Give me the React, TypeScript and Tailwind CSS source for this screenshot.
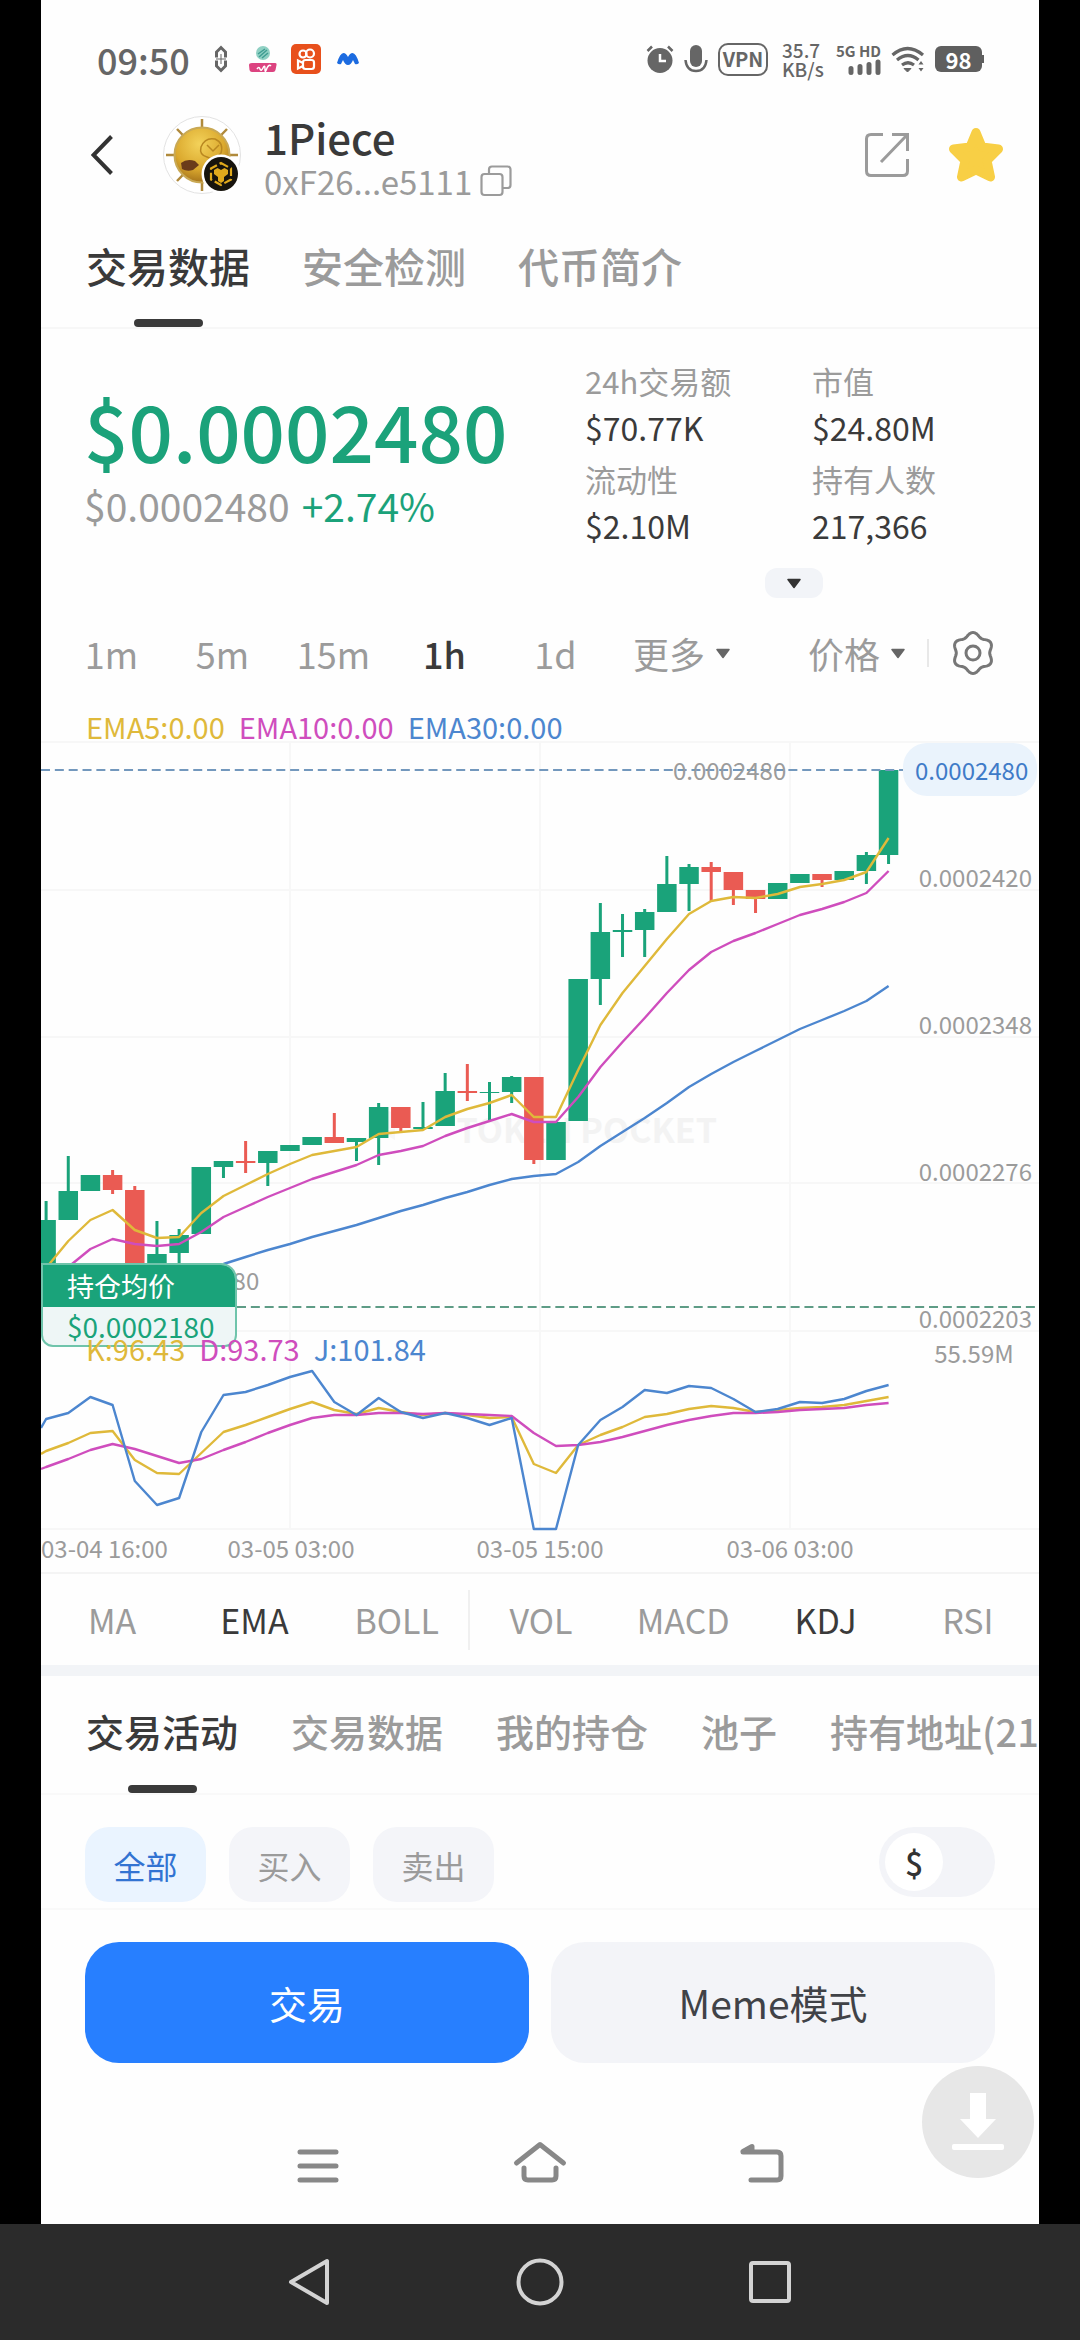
import { useState } from 'react'

// [high, top, bottom, low, direction] in chart units, one entry per hour
type Candle = [number, number, number, number, 'up' | 'down']

const candles: Candle[] = [
  [493, 512, 560, 560, 'up'],
  [448, 483, 512, 512, 'up'],
  [467, 467, 483, 483, 'up'],
  [462, 467, 482, 486, 'down'],
  [478, 482, 560, 560, 'down'],
  [513, 546, 560, 560, 'up'],
  [521, 527, 545, 556, 'up'],
  [459, 459, 526, 526, 'up'],
  [453, 453, 459, 470, 'up'],
  [433, 453, 455, 465, 'down'],
  [443, 443, 455, 478, 'up'],
  [437, 437, 443, 443, 'up'],
  [429, 429, 437, 437, 'up'],
  [405, 429, 435, 435, 'down'],
  [430, 430, 434, 453, 'up'],
  [395, 399, 430, 457, 'up'],
  [399, 399, 420, 425, 'down'],
  [394, 419, 421, 421, 'up'],
  [365, 383, 418, 418, 'up'],
  [356, 383, 385, 393, 'down'],
  [374, 384, 385, 412, 'up'],
  [368, 369, 384, 395, 'up'],
  [369, 369, 452, 456, 'down'],
  [414, 414, 452, 452, 'up'],
  [271, 271, 413, 413, 'up'],
  [195, 224, 271, 297, 'up'],
  [206, 222, 224, 249, 'up'],
  [201, 204, 222, 249, 'up'],
  [148, 176, 204, 204, 'up'],
  [156, 159, 176, 203, 'up'],
  [154, 159, 164, 194, 'down'],
  [164, 164, 182, 197, 'down'],
  [182, 182, 191, 205, 'down'],
  [175, 175, 191, 191, 'up'],
  [166, 166, 175, 175, 'up'],
  [166, 166, 172, 179, 'down'],
  [163, 163, 172, 172, 'up'],
  [144, 147, 163, 176, 'up'],
  [62, 62, 147, 156, 'up'],
]

const ema5 = [560, 533, 512, 502, 522, 530, 529, 505, 488, 477, 466, 456, 447, 443, 439, 426, 424, 422, 409, 401, 395, 387, 409, 409, 362, 317, 285, 258, 231, 206, 193, 189, 190, 186, 179, 176, 172, 164, 130]
const ema10 = [575, 559, 541, 531, 536, 538, 536, 524, 509, 499, 489, 480, 471, 464, 457, 447, 443, 438, 428, 420, 413, 406, 414, 414, 389, 359, 334, 310, 285, 262, 244, 233, 225, 216, 207, 201, 194, 185, 163]
const ema30 = [556, 549, 542, 536, 529, 523, 517, 510, 503, 497, 490, 484, 477, 471, 468, 466, 454, 438, 424, 410, 395, 379, 366, 354, 343, 332, 321, 312, 303, 293, 278]

const kLine = [743, 735, 725, 723, 752, 765, 766, 745, 724, 717, 709, 701, 694, 702, 706, 700, 704, 707, 705, 707, 710, 709, 756, 765, 737, 727, 719, 709, 706, 701, 698, 700, 704, 702, 700, 699, 697, 693, 689]
const dLine = [759, 751, 742, 736, 741, 748, 755, 751, 742, 734, 725, 717, 710, 707, 707, 705, 705, 706, 705, 706, 707, 708, 725, 738, 737, 734, 729, 723, 717, 712, 708, 705, 705, 704, 702, 701, 700, 697, 695]
const jLine = [711, 705, 689, 697, 773, 797, 790, 724, 687, 684, 677, 669, 663, 694, 707, 690, 704, 710, 705, 710, 717, 710, 821, 821, 737, 712, 699, 682, 685, 678, 680, 691, 704, 701, 694, 695, 691, 683, 677]

const xAt = (i: number) => 5.1 + 22.17 * i

function toPoints(values: number[], start = 0, edge?: number) {
  const pts = values.map((y, i) => `${xAt(i + start).toFixed(1)},${y}`)
  if (edge !== undefined) pts.unshift(`0,${edge}`)
  return pts.join(' ')
}

// six-lobed outline of the settings icon
const gearPoints = Array.from({ length: 120 }, (_, i) => {
  const a = (i / 120) * Math.PI * 2
  const r = 18.6 - 1.9 * Math.cos(6 * a)
  return `${(22 + r * Math.cos(a)).toFixed(2)},${(22 + r * Math.sin(a)).toFixed(2)}`
}).join(' ')

function Caret({ className }: { className: string }) {
  return (
    <svg viewBox="0 0 14 11" className={className} fill="currentColor" stroke="currentColor" strokeWidth="1.5" strokeLinejoin="round">
      <path d="M1 1.5h12L7 9.5z" />
    </svg>
  )
}

function StatusBar() {
  return (
    <div className="flex h-[88px] items-center pt-[30px] pr-[55px] pl-[56px] text-[#666]">
      <span className="text-[36px] leading-10 font-medium">09:50</span>
      <svg viewBox="0 0 14 28" className="ml-6 h-7 w-3.5" fill="none" stroke="currentColor" strokeWidth="3">
        <path d="M2.5 12.500V7L7 2.500 11.500 7v5.500M2.500 15.500V21L7 25.500 11.500 21v-5.500" />
        <path d="M7 9v10M2 14h10" strokeWidth="1" />
      </svg>
      <svg viewBox="0 0 28 28" className="ml-[21px] size-7">
        <circle cx="14" cy="8" r="7" fill="#8fd0c3" />
        <path d="M9 9l7-5M10 12l8-7M13 13l6-5" stroke="#3f9d92" strokeWidth="1.500" />
        <path d="M3 18h23q2 0 1.500 2l-1 5q-.5 2-2.500 2H3q-2 0-2.500-2l-.5-5q0-2 3-2z" fill="#dc4380" />
        <path d="M8 24q2-3 3 0t3-1 2 1 2-1q2-4 4-2" stroke="#fff" strokeWidth="1.500" fill="none" />
      </svg>
      <svg viewBox="0 0 30 30" className="ml-3.5 size-[30px]" fill="none" stroke="#fff" strokeWidth="2.200">
        <rect width="30" height="30" rx="5" fill="#e8501c" stroke="none" />
        <circle cx="12" cy="10" r="3.500" />
        <circle cx="19" cy="9.500" r="4" />
        <rect x="12" y="16" width="11" height="9" rx="2.500" />
        <path d="M12 19l-5-2.500v8L12 22" />
      </svg>
      <svg viewBox="0 0 22 12" className="ml-4 h-3 w-[22px]" fill="#1c6be0">
        <path d="M0 10Q3 0 6.500 0 9 0 11 4 13 0 15.500 0 19 0 22 10q-2 2-4 1l-2-4q-2 5-5 5t-5-5l-2 4q-2 1-4-1z" />
      </svg>

      <div className="ml-auto flex items-center">
        <svg viewBox="0 0 28 28" className="size-7" fill="none" stroke="currentColor">
          <circle cx="14" cy="15.500" r="12.500" fill="currentColor" stroke="none" />
          <path d="M1.500 6L6 1.500M26.500 6L22 1.500" strokeWidth="2.500" />
          <path d="M14 9v7h6" stroke="#fff" strokeWidth="2.500" />
        </svg>
        <svg viewBox="0 0 24 28" className="ml-2.5 h-7 w-6" fill="none" stroke="currentColor">
          <rect x="6" y="0" width="12" height="22" rx="6" fill="currentColor" stroke="none" />
          <path d="M1.500 15q1 11 10.500 11t10.500-11" strokeWidth="2.500" />
        </svg>
        <span className="ml-2.5 flex h-[33px] w-[50px] items-center justify-center rounded-[10px] border-2 border-[#666] text-[20px] leading-6 font-bold">VPN</span>
        <span className="ml-3.5 flex w-[42px] flex-col text-[19px] leading-[19px] font-medium">
          <span>35.7</span>
          <span>KB/s</span>
        </span>
        <span className="ml-[11px] flex w-[46px] flex-col items-end">
          <span className="text-[15px] leading-4 font-bold whitespace-nowrap">5G HD</span>
          <svg viewBox="0 0 33 16" className="h-4 w-[33px]" stroke="currentColor" strokeWidth="5" strokeLinecap="round">
            <path d="M3 13.500v-4M12 13.500v-6M21 13.500V5.500M30 13.500V3" />
          </svg>
        </span>
        <svg viewBox="0 0 34 27" className="ml-2.5 h-[27px] w-[34px]" fill="none" stroke="currentColor" strokeWidth="3.200">
          <path d="M1.500 9q15-13 30.500 0M6 14q11-9 21.500 0M11 19q6-4.500 12 0" />
          <path d="M13 22.500h7L16.500 26z" fill="currentColor" strokeWidth="1" />
          <path d="M27.500 18.500L30 15l2.500 3.500zM27.500 22L30 25.500l2.500-3.500z" fill="currentColor" stroke="none" />
        </svg>
        <span className="ml-2.5 flex h-[26px] w-[47px] items-center justify-center rounded-md bg-[#5f5f5f] text-[22px] leading-6 font-bold text-white">98</span>
        <span className="h-2 w-0.5 bg-[#5f5f5f]" />
      </div>
    </div>
  )
}

function TokenAvatar() {
  return (
    <svg viewBox="0 0 80 80" className="ml-[50px] size-20">
      <defs>
        <radialGradient id="gold" cx="45%" cy="30%" r="75%">
          <stop offset="0" stopColor="#f3d25a" />
          <stop offset="0.6" stopColor="#dba92e" />
          <stop offset="1" stopColor="#9c6a17" />
        </radialGradient>
      </defs>
      <circle cx="39" cy="40" r="38.500" fill="#fff" stroke="#e3e3e3" />
      <path d="M39 4v72M3 40h72M14 14l50 52M64 14L14 66" stroke="#b08a3c" strokeWidth="2.500" />
      <circle cx="39" cy="40" r="27.500" fill="url(#gold)" stroke="#c9a955" strokeWidth="2" />
      <path d="M38 32q4-10 14-8 9 4 6 14-6 8-14 4-8-2-6-10zM44 30l6 6 6-6" fill="none" stroke="#b98720" strokeWidth="1.500" />
      <path d="M18 48q6-5 14-2l4 4-6 5q-6 2-11-1z" fill="#6b3b1a" />
      <circle cx="58" cy="59" r="19.500" fill="#fff" />
      <circle cx="58" cy="59" r="17" fill="#17140d" />
      <path d="M58 48l10 5.500v11L58 70l-10-5.500v-11z" fill="none" stroke="#e0a91c" strokeWidth="2.200" strokeDasharray="8 3" />
      <path d="M51 55l3.500-2 3.500 2 3.500-2 3.500 2v4l-4 3v4l-3 2-3-2v-4l-4-3z" fill="#e0a91c" />
    </svg>
  )
}

function Header() {
  return (
    <header className="flex h-[134px] items-center pr-[35px] pl-[50px]">
      <button aria-label="返回">
        <svg viewBox="0 0 22 40" className="h-10 w-[22px]" fill="none" stroke="#333" strokeWidth="4">
          <path d="M20.500 1.500L2.500 20l18 18.500" />
        </svg>
      </button>
      <TokenAvatar />
      <div className="ml-[21px] pt-1.5">
        <h1 className="text-[42px] leading-[46px] font-medium text-[#3a3a3a]">1Piece</h1>
        <div className="flex items-center text-[#9b9b9b]">
          <span className="text-[33px] leading-[42px]">0xF26...e5111</span>
          <button aria-label="复制地址" className="ml-2">
            <svg viewBox="0 0 32 32" className="size-8" fill="none" stroke="currentColor" strokeWidth="2.200">
              <rect x="1.500" y="9" width="21" height="21" rx="3" />
              <path d="M9 9V4.500q0-3 3-3h15.500q3 0 3 3V20q0 3-3 3h-5" />
            </svg>
          </button>
        </div>
      </div>
      <button aria-label="分享" className="ml-auto">
        <svg viewBox="0 0 46 46" className="size-[46px]" fill="none" stroke="#9b9b9b" strokeWidth="3">
          <path d="M19 2.500H7q-4.500 0-4.500 4.500v32q0 4.500 4.500 4.500h32q4.500 0 4.500-4.500V27" />
          <path d="M28 2.500h15.500V19M43 3L17 30" />
        </svg>
      </button>
      <button aria-label="收藏" className="ml-[38px]">
        <svg viewBox="0 0 56 56" className="size-14" fill="#f8cf45" stroke="#f8cf45" strokeWidth="9" strokeLinejoin="round">
          <path d="M28 5.500l6 14.500 16.500 2L39 33.500l3.500 16.500L28 43l-14.500 7L17 33.500 5.500 22 22 20z" />
        </svg>
      </button>
    </header>
  )
}

function PageTabs() {
  const [active, setActive] = useState('交易数据')
  return (
    <nav className="flex gap-[52px] border-b-2 border-[#f7f7f7] pt-[18px] pl-[45px] text-[41px]">
      {['交易数据', '安全检测', '代币简介'].map((tab) => (
        <button key={tab} onClick={() => setActive(tab)} className={`flex flex-col items-center font-medium ${tab === active ? 'text-[#3a3a3a]' : 'text-[#9b9b9b]'}`}>
          <span className="leading-[50px]">{tab}</span>
          <span className={`mt-[29px] h-2 w-[69px] rounded-full ${tab === active ? 'bg-[#3a3a3a]' : ''}`} />
        </button>
      ))}
    </nav>
  )
}

const stats = [
  { label: '24h交易额', value: '$70.77K' },
  { label: '市值', value: '$24.80M' },
  { label: '流动性', value: '$2.10M' },
  { label: '持有人数', value: '217,366' },
]

function PriceSummary() {
  return (
    <section className="pt-[29px] pr-9 pl-[43px]">
      <div className="flex items-center justify-between">
        <div className="pt-2">
          <p className="text-[78px] leading-[80px] font-medium text-[#1ba27a]">$0.0002480</p>
          <p className="mt-4 flex gap-3 text-[39px] leading-10">
            <span className="text-[#9b9b9b]">$0.0002480</span>
            <span className="text-[#1ba27a]">+2.74%</span>
          </p>
        </div>
        <dl className="grid w-[418px] grid-cols-[227px_1fr] gap-y-1.5">
          {stats.map((s) => (
            <div key={s.label}>
              <dt className="text-[31px] leading-[46px] text-[#9b9b9b]">{s.label}</dt>
              <dd className="text-[32px] leading-[46px] text-[#3a3a3a]">{s.value}</dd>
            </div>
          ))}
        </dl>
      </div>
      <div className="mt-5 ml-auto flex w-[418px] justify-center">
        <button aria-label="展开" className="flex h-[30px] w-[58px] items-center justify-center rounded-xl bg-[#f2f4f8] text-[#333]">
          <Caret className="h-[11px] w-3.5" />
        </button>
      </div>
    </section>
  )
}

function Timeframes() {
  const [active, setActive] = useState('1h')
  return (
    <div className="flex items-center py-[25px] pr-11 pl-[15px] text-[36px] leading-[60px] text-[#9b9b9b]">
      {['1m', '5m', '15m', '1h', '1d'].map((t) => (
        <button key={t} onClick={() => setActive(t)} className={`w-[111px] ${t === active ? 'font-medium text-[#3a3a3a]' : ''}`}>
          {t}
        </button>
      ))}
      <label className="ml-[22px] flex items-center gap-2.5">
        <select aria-label="更多周期" className="h-[60px] appearance-none bg-transparent">
          <option>更多</option>
        </select>
        <Caret className="h-[11px] w-3.5 text-[#666]" />
      </label>
      <label className="ml-auto flex items-center gap-2.5">
        <select aria-label="图表类型" className="h-[60px] appearance-none bg-transparent">
          <option>价格</option>
        </select>
        <Caret className="h-[11px] w-3.5 text-[#666]" />
      </label>
      <span className="ml-[22px] h-7 w-0.5 bg-[#e8e8e8]" />
      <button aria-label="设置" className="ml-[22px]">
        <svg viewBox="0 0 44 44" className="size-11" fill="none" stroke="#777" strokeWidth="3">
          <polygon points={gearPoints} strokeLinejoin="round" />
          <circle cx="22" cy="22" r="7" />
        </svg>
      </button>
    </div>
  )
}

function Chart() {
  return (
    <section className="relative border-b-2 border-[#f4f4f4]">
      <svg viewBox="0 0 998 864" className="block w-full text-[24px]" fill="none">
        <g stroke="#f7f7f7" strokeWidth="2">
          {[34, 182, 329, 475, 623, 821].map((y) => (
            <line key={y} x1="0" x2="998" y1={y} y2={y} />
          ))}
          {[249, 499, 749].map((x) => (
            <line key={x} x1={x} x2={x} y1="34" y2="821" />
          ))}
        </g>
        <path d="M330 412l18-9 18 9-18 9zM340 424l14 8v-12" fill="#f7f7f7" />
        <text x="676" y="435" textAnchor="end" fill="#f3f3f3" className="text-[34px] font-bold">TOKEN POCKET</text>

        {candles.map(([high, top, bottom, low, dir], i) => {
          const color = dir === 'up' ? '#1aa37a' : '#ea5b53'
          return (
            <g key={i} fill={color}>
              <rect x={xAt(i) - 1.5} y={high} width="3" height={low - high} />
              <rect x={xAt(i) - 9.75} y={top} width="19.500" height={bottom - top} />
            </g>
          )
        })}

        <g strokeWidth="2.400" strokeLinejoin="round">
          <polyline points={toPoints(ema5)} stroke="#dfb93a" />
          <polyline points={toPoints(ema10)} stroke="#cf4dbd" />
          <polyline points={toPoints(ema30, 8)} stroke="#4c86cf" />
          <polyline points={toPoints(kLine, 0, 746)} stroke="#dfb93a" />
          <polyline points={toPoints(dLine, 0, 761)} stroke="#cf4dbd" />
          <polyline points={toPoints(jLine, 0, 720)} stroke="#4c86cf" />
        </g>

        <line x1="0" x2="864" y1="62" y2="62" stroke="#7398bd" strokeWidth="2" strokeDasharray="9 4.840" />
        <line x1="196" x2="996" y1="599" y2="599" stroke="#5e9c86" strokeWidth="2" strokeDasharray="9 4.840" />

        <g fill="#9b9b9b">
          <text x="632" y="72">0.0002480</text>
          <text x="105" y="582">0.0002180</text>
          <g textAnchor="end">
            <text x="991" y="179">0.0002420</text>
            <text x="991" y="326">0.0002348</text>
            <text x="991" y="473">0.0002276</text>
            <text x="991" y="620">0.0002203</text>
          </g>
          <text x="933" y="655" textAnchor="middle">55.59M</text>
          <text x="0" y="850">03-04 16:00</text>
          <g textAnchor="middle">
            <text x="250" y="850">03-05 03:00</text>
            <text x="499" y="850">03-05 15:00</text>
            <text x="749" y="850">03-06 03:00</text>
          </g>
        </g>
        <rect x="862" y="35" width="134" height="53" rx="24" fill="#eaf3fc" />
        <text x="874" y="72" fill="#3f7bc8">0.0002480</text>
      </svg>

      <div className="absolute top-[64.2%] left-0 w-[196px] overflow-hidden rounded-tr-2xl rounded-b-xl border-2 border-[#1aa37a]/60 bg-[#eef6f6]">
        <p className="bg-[#1aa37a] pl-6 text-[27px] leading-[42px] text-white">持仓均价</p>
        <p className="pl-6 text-[28px] leading-[38px] text-[#1aa37a]">$0.0002180</p>
      </div>

      <div className="absolute top-0 left-[45px] flex gap-3.5 text-[29px] leading-9">
        <span className="text-[#dfb93a]">EMA5:0.00</span>
        <span className="text-[#cf4dbd]">EMA10:0.00</span>
        <span className="text-[#4c86cf]">EMA30:0.00</span>
      </div>
      <div className="absolute top-[72%] left-[45px] flex gap-3.5 text-[29px] leading-9">
        <span className="text-[#dfb93a]">K:96.43</span>
        <span className="text-[#cf4dbd]">D:93.73</span>
        <span className="text-[#4c86cf]">J:101.84</span>
      </div>
    </section>
  )
}

function Indicators() {
  const [active, setActive] = useState(['EMA', 'KDJ'])
  const toggle = (name: string) =>
    setActive((prev) => (prev.includes(name) ? prev.filter((n) => n !== name) : [...prev, name]))

  return (
    <div className="flex h-[91px] items-center text-[34px]">
      {['MA', 'EMA', 'BOLL', 'VOL', 'MACD', 'KDJ', 'RSI'].map((name) => (
        <button
          key={name}
          onClick={() => toggle(name)}
          className={`flex-1 basis-0 leading-[60px] ${name === 'VOL' ? 'border-l-2 border-[#f0f0f0]' : ''} ${active.includes(name) ? 'text-[#3a3a3a]' : 'text-[#9b9b9b]'}`}
        >
          {name}
        </button>
      ))}
    </div>
  )
}

function Activity() {
  const [tab, setTab] = useState('交易活动')
  const [filter, setFilter] = useState('全部')
  return (
    <section>
      <nav className="flex gap-[53px] overflow-hidden border-b-2 border-[#f9f9f9] pt-[30px] pl-[45px] text-[38px] whitespace-nowrap">
        {['交易活动', '交易数据', '我的持仓', '池子', '持有地址(217366)'].map((t) => (
          <button key={t} onClick={() => setTab(t)} className={`flex shrink-0 flex-col items-center font-medium ${t === tab ? 'text-[#3a3a3a]' : 'text-[#9b9b9b]'}`}>
            <span className="leading-[50px]">{t}</span>
            <span className={`mt-[29px] h-2 w-[69px] rounded-full ${t === tab ? 'bg-[#3a3a3a]' : ''}`} />
          </button>
        ))}
      </nav>
      <div className="flex items-start gap-[23px] border-b-2 border-[#f9f9f9] px-11 pt-8 pb-1.5">
        {['全部', '买入', '卖出'].map((f) => (
          <button
            key={f}
            onClick={() => setFilter(f)}
            className={`h-[75px] w-[121px] rounded-3xl text-[32px] ${f === filter ? 'bg-[#eaf4ff] text-[#3273d2]' : 'bg-[#f4f5f9] text-[#9b9b9b]'}`}
          >
            {f}
          </button>
        ))}
        <label className="ml-auto flex h-[70px] w-[116px] items-center rounded-full bg-[#f3f4f8] px-1.5">
          <input type="checkbox" aria-label="以美元计价" defaultChecked className="sr-only" />
          <span className="flex size-[58px] items-center justify-center rounded-full bg-white text-[32px] font-medium text-[#333]">$</span>
        </label>
      </div>
    </section>
  )
}

function TradeButtons() {
  return (
    <div className="flex gap-[22px] px-11 pt-8">
      <button className="h-[121px] flex-1 rounded-[34px] bg-[#277fff] text-[38px] text-white">交易</button>
      <button className="h-[121px] flex-1 rounded-[34px] bg-[#f3f4f8] text-[39px] text-[#404247]">Meme模式</button>
    </div>
  )
}

function PhoneNav() {
  return (
    <div className="relative flex min-h-[161px] flex-1 items-start justify-center gap-[166px] pt-[75px]">
      <button aria-label="最近任务">
        <svg viewBox="0 0 56 56" className="size-14" stroke="#888" strokeWidth="5" strokeLinecap="round">
          <path d="M10 14h36M10 28h36M10 42h36" />
        </svg>
      </button>
      <button aria-label="主页">
        <svg viewBox="0 0 56 56" className="size-14" fill="none" stroke="#888" strokeWidth="5" strokeLinecap="round">
          <path d="M4.500 25L28 6.500 51.500 25" strokeLinejoin="round" />
          <path d="M12 30v8q0 4 4 4h24q4 0 4-4v-8" />
        </svg>
      </button>
      <button aria-label="后退">
        <svg viewBox="0 0 56 56" className="size-14" fill="none" stroke="#888" strokeWidth="5" strokeLinecap="round" strokeLinejoin="round">
          <path d="M9 14h34q4 0 4 4v20q0 4-4 4H17M9 13.500L18 8.500V14" />
        </svg>
      </button>
      <button aria-label="下载" className="absolute top-[3px] right-[5px] flex size-28 items-center justify-center rounded-full bg-[#e7e7e7]">
        <svg viewBox="0 0 52 58" className="h-[58px] w-[52px]" fill="#fff">
          <path d="M18 0h16v26h10L26 45 8 26h10z" />
          <rect x="0" y="51" width="52" height="6" rx="2" />
        </svg>
      </button>
    </div>
  )
}

function SystemNav() {
  return (
    <nav className="flex h-[116px] items-center justify-center gap-[182px] bg-[#2b2b2b]">
      <button aria-label="返回上一页">
        <svg viewBox="0 0 48 48" className="size-12" fill="none" stroke="#d3d3d3" strokeWidth="4" strokeLinejoin="round">
          <path d="M41 3v42L5 24z" />
        </svg>
      </button>
      <button aria-label="主屏幕">
        <svg viewBox="0 0 48 48" className="size-12" fill="none" stroke="#d3d3d3" strokeWidth="4">
          <circle cx="24" cy="24" r="21.500" />
        </svg>
      </button>
      <button aria-label="概览">
        <svg viewBox="0 0 48 48" className="size-12" fill="none" stroke="#d3d3d3" strokeWidth="4">
          <rect x="5" y="5" width="38" height="38" rx="2" />
        </svg>
      </button>
    </nav>
  )
}

function App() {
  return (
    <div className="flex min-h-screen flex-col bg-black font-['Noto_Sans_CJK_SC',sans-serif]">
      <main className="mx-[41px] flex flex-1 flex-col bg-[#fefefe]">
        <StatusBar />
        <Header />
        <PageTabs />
        <PriceSummary />
        <Timeframes />
        <Chart />
        <Indicators />
        <div className="h-[11px] bg-[#f2f4f7]" />
        <Activity />
        <TradeButtons />
        <PhoneNav />
      </main>
      <SystemNav />
    </div>
  )
}

export default App
